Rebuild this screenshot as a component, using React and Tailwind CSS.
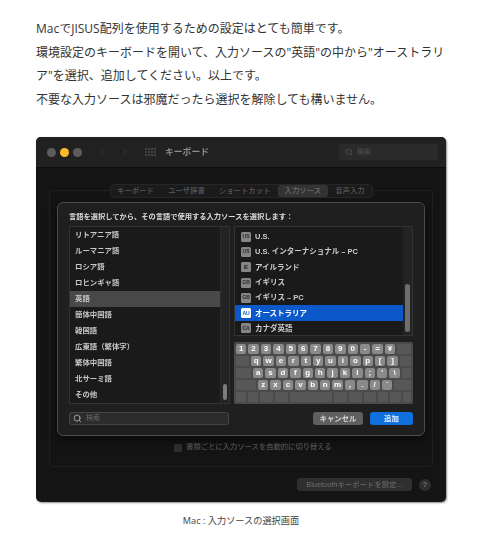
import React from "react";
import { Search, ChevronLeft, ChevronRight } from "lucide-react";

const leftItems = [
  "リトアニア語",
  "ルーマニア語",
  "ロシア語",
  "ロヒンギャ語",
  "英語",
  "簡体中国語",
  "韓国語",
  "広東語（繁体字）",
  "繁体中国語",
  "北サーミ語",
  "その他",
];

const rightItems = [
  ["US", "U.S."],
  ["US", "U.S. インターナショナル – PC"],
  ["IE", "アイルランド"],
  ["GB", "イギリス"],
  ["GB", "イギリス – PC"],
  ["AU", "オーストラリア"],
  ["CA", "カナダ英語"],
];

const keyRows = [
  { lead: "", keys: "1 2 3 4 5 6 7 8 9 0 - = ¥" },
  { lead: "w-[13px]", keys: "q w e r t y u i o p [ ]" },
  { lead: "w-[15px]", keys: "a s d f g h j k l ; ' \\" },
  { lead: "w-[20px]", keys: "z x c v b n m , . / `" },
];

const bottomKeys = ["w-[10px]", "w-[10px]", "w-[13px]", "w-[13px]", "w-[42px]", "w-[13px]", "w-[13px]", "w-[12px]", "w-[10px]", "w-[11px]"];

const Keyboard = () => (
  <div className="mt-[6px] flex h-[62px] flex-col gap-[2px] rounded-[2px] bg-[#4b4b4b] p-[2px]">
    {keyRows.map((row) => (
      <div key={row.keys} className="flex h-[10px] gap-[2px]">
        {row.lead && <div className={`${row.lead} rounded-[1px] bg-[#585858]`} />}
        {row.keys.split(" ").map((k) => (
          <div
            key={k}
            className="flex w-[10.4px] items-center justify-center rounded-[2px] bg-[#8a8a8a] text-[8px] leading-none font-bold text-white"
          >
            {k}
          </div>
        ))}
        <div className="flex-1 rounded-[1px] bg-[#585858]" />
      </div>
    ))}
    <div className="flex h-[10px] gap-[2px]">
      {bottomKeys.map((w, i) => (
        <div key={i} className={`${w} rounded-[1px] bg-[#585858]`} />
      ))}
      <div className="flex-1 rounded-[1px] bg-[#585858]" />
    </div>
  </div>
);

const InputSheet = () => (
  <div className="absolute top-[65px] left-[21px] flex h-[234px] w-[368px] flex-col rounded-[6px] border border-[#4c4c4c] bg-[#1f1f1f] px-[11px] pt-[9px] shadow-[0_4px_10px_rgba(0,0,0,0.6)]">
    <p className="h-[14px] text-[7.25px] leading-[10px] font-bold whitespace-nowrap text-[#dcdcdc]">
      言語を選択してから、その言語で使用する入力ソースを選択します：
    </p>
    <div className="flex gap-[4px]">
      {/* language list */}
      <div className="flex h-[178px] w-[161px] border border-[#333] bg-[#1a1a1a]">
        <div className="flex-1">
          {leftItems.map((item) => (
            <div
              key={item}
              className={`flex h-[16px] items-center pl-[5px] text-[7.4px] font-bold text-[#c8c8c8] ${
                item === "英語" ? "bg-[#484848]" : ""
              }`}
            >
              {item}
            </div>
          ))}
        </div>
        <div className="flex w-[9px] flex-col justify-end border-l border-[#2c2c2c] bg-[#232323] px-[2px] pb-[3px]">
          <div className="h-[16px] rounded-full bg-[#7c7c7c]" />
        </div>
      </div>
      {/* input sources + keyboard */}
      <div className="w-[179px]">
        <div className="flex h-[110px] border border-[#333] bg-[#1a1a1a]">
          <div className="flex-1 pt-[2px]">
            {rightItems.map(([code, name]) => (
              <div
                key={name}
                className={`flex h-[15.3px] items-center gap-[4px] pl-[6px] text-[7.5px] font-bold ${
                  code === "AU" ? "bg-[#0a58ca] text-white" : "text-[#cccccc]"
                }`}
              >
                <span
                  className={`flex h-[10px] w-[10px] items-center justify-center rounded-[1.5px] text-[5px] leading-none font-bold ${
                    code === "AU" ? "bg-white text-[#0a58ca]" : "bg-[#858585] text-[#2a2a2a]"
                  }`}
                >
                  {code}
                </span>
                {name}
              </div>
            ))}
          </div>
          <div className="flex w-[9px] flex-col justify-end bg-[#232323] px-[2px] pb-[3px]">
            <div className="h-[48px] rounded-full bg-[#6e6e6e]" />
          </div>
        </div>
        <Keyboard />
      </div>
    </div>
    <div className="mt-[8px] flex items-center gap-[4px]">
      <div className="flex h-[13px] w-[160px] items-center gap-[4px] rounded-[3px] border border-[#444] bg-[#2c2c2c] pl-[3px] text-[7px] text-[#6a6a6a]">
        <Search size={9} strokeWidth={2} className="text-[#c0c0c0]" />
        検索
      </div>
      <div className="ml-auto flex h-[13px] w-[50px] items-center justify-center rounded-[3px] bg-[#5f5f5f] text-[7.4px] font-bold text-[#d8d8d8]">
        キャンセル
      </div>
      <div className="ml-[3px] flex h-[13px] w-[43px] items-center justify-center rounded-[3px] bg-[#0f6fdc] text-[7.4px] font-bold text-[#e6f0ff]">
        追加
      </div>
    </div>
  </div>
);

const PrefsWindow = () => (
  <div className="relative h-[365px] w-[410px] overflow-hidden rounded-[5px] bg-[#141414] font-['Liberation_Sans','Noto_Sans_CJK_JP',sans-serif] shadow-[1px_1px_2px_rgba(0,0,0,0.45)] blur-[0.35px]">
    {/* title bar */}
    <div className="flex h-[31px] items-center border-b border-[#0c0c0c] bg-[#212121] pl-[11px]">
      <span className="h-[9px] w-[9px] rounded-full bg-[#5c5c5c]" />
      <span className="ml-[4px] h-[9px] w-[9px] rounded-full bg-[#fdb92c]" />
      <span className="ml-[4px] h-[9px] w-[9px] rounded-full bg-[#5c5c5c]" />
      <ChevronLeft size={12} className="ml-[14px] text-[#3c3c3c]" />
      <ChevronRight size={12} className="ml-[11px] text-[#3c3c3c]" />
      <div className="ml-[14px] grid grid-cols-4 gap-[1.5px]">
        {Array.from({ length: 12 }, (_, i) => (
          <span key={i} className="h-[1.5px] w-[1.5px] bg-[#444]" />
        ))}
      </div>
      <span className="mt-[2px] ml-[9.5px] text-[8.8px] font-bold text-[#8c8c8c]">キーボード</span>
      <div className="mr-[8px] ml-auto flex h-[16px] w-[99px] items-center gap-[4px] rounded-[3px] bg-[#2a2a2a] pl-[6px] text-[7px] text-[#555]">
        <Search size={8} className="text-[#5c5c5c]" />
        検索
      </div>
    </div>

    {/* tabs sit on the top edge of the panel */}
    <div className="relative z-10 mt-[16px] ml-[74px] flex h-[14px] w-[263px] items-center rounded-[4px] border border-[#262626] bg-[#1b1b1b] text-[7.4px] font-medium whitespace-nowrap text-[#585858]">
      <span className="ml-[6px]">キーボード</span>
      <span className="ml-[14px]">ユーザ辞書</span>
      <span className="ml-[14px]">ショートカット</span>
      <span className="ml-[7px] rounded-[3px] bg-[#333] px-[7px] leading-[12px] text-[#6c6c6c]">入力ソース</span>
      <span className="ml-[7px]">音声入力</span>
    </div>

    {/* dimmed panel behind the sheet */}
    <div className="mx-[13px] -mt-[8px] flex h-[277px] items-end justify-center rounded-[4px] border border-[#202020] pb-[13px] pl-[24px]">
      <div className="flex items-center gap-[4px] text-[7.3px] font-medium text-[#585858]">
        <span className="h-[8px] w-[8px] rounded-[1.5px] bg-[#2e2e2e]" />
        書類ごとに入力ソースを自動的に切り替える
      </div>
    </div>

    <div className="mt-[11px] mr-[15px] flex items-center justify-end gap-[7px]">
      <div className="flex h-[13px] w-[115px] items-center justify-center rounded-[3px] bg-[#2f2f2f] text-[7.4px] whitespace-nowrap text-[#707070]">
        Bluetoothキーボードを設定...
      </div>
      <div className="flex h-[12px] w-[12px] items-center justify-center rounded-full bg-[#2f2f2f] text-[8px] font-bold text-[#707070]">
        ?
      </div>
    </div>

    <InputSheet />
  </div>
);

export default function App() {
  return (
    <div className="h-[540px] w-[500px] overflow-hidden bg-white pt-[17px] pl-[36px] font-['Open_Sans','Noto_Sans_CJK_JP',sans-serif] text-[#333]">
      <div className="w-[412px] text-[12px] leading-[23.5px]">
        <p>MacでJISUS配列を使用するための設定はとても簡単です。</p>
        <p>環境設定のキーボードを開いて、入力ソースの"英語"の中から"オーストラリア"を選択、追加してください。以上です。</p>
        <p>不要な入力ソースは邪魔だったら選択を解除しても構いません。</p>
      </div>
      <div className="mt-[26px]">
        <PrefsWindow />
      </div>
      <p className="mt-[13px] w-[410px] text-center text-[9.2px] leading-[12px] text-[#444]">Mac : 入力ソースの選択画面</p>
    </div>
  );
}
